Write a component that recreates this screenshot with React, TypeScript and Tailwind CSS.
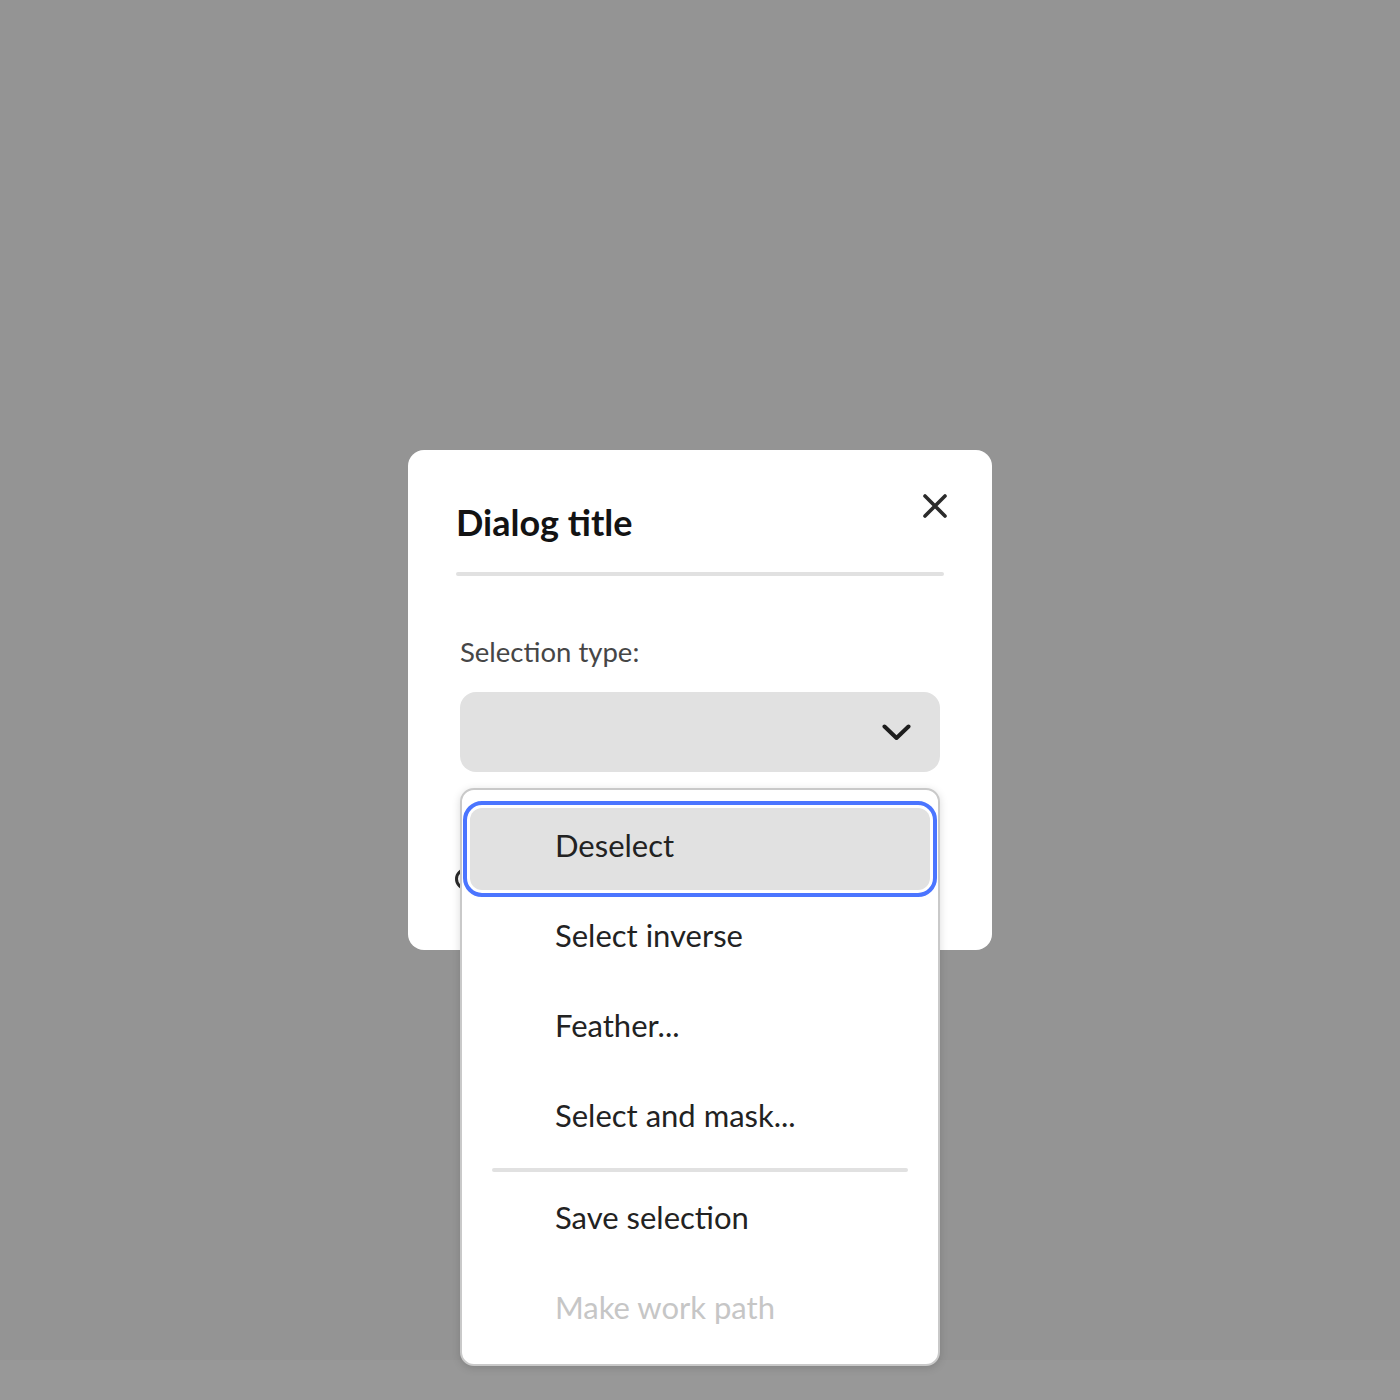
import React from "react";

const items = [
  { label: "Deselect", focused: true },
  { label: "Select inverse" },
  { label: "Feather..." },
  { label: "Select and mask..." },
];

function Item({ label, focused, disabled }: { label: string; focused?: boolean; disabled?: boolean }) {
  return (
    <div
      className={
        "mx-[8px] h-[82px] shrink-0 rounded-[12px] flex items-center pl-[85px] text-[31px] " +
        (disabled ? "text-[#c6c6c6] " : "text-[#222222] ") +
        (focused ? "bg-[#e1e1e1] outline-[4px] outline-solid outline-[#4b75ff] outline-offset-[3px]" : "")
      }
    >
      <span className="-mt-[7px]">{label}</span>
    </div>
  );
}

export default function App() {
  return (
    <div className="w-[1400px] h-[1400px] bg-[#989898] relative" style={{ fontFamily: "Lato, 'Liberation Sans', sans-serif" }}>
      <div className="h-[1360px] bg-[#949494]" />
      <div className="absolute inset-0 flex items-center justify-center">
        <div className="relative w-[584px] h-[500px] bg-white rounded-[16px] flex flex-col">
          <div className="flex items-start justify-between pl-[48px] pr-[44px]">
            <h2 className="pt-[52px] text-[36px] leading-[40px] font-bold text-[#131313]">Dialog title</h2>
            <button className="mt-[42px] mr-[-1px] w-[28px] h-[28px] flex items-center justify-center text-[#2b2b2b]">
              <svg width="24" height="24" viewBox="0 0 24 24" fill="none" stroke="currentColor" strokeWidth="3.6" strokeLinecap="round">
                <path d="M2 2 L22 22 M22 2 L2 22" />
              </svg>
            </button>
          </div>
          <div className="mx-[48px] mt-[30px] h-[4px] rounded-full bg-[#e1e1e1]" />
          <div className="px-[52px] pt-[59px]">
            <div className="text-[27.5px] leading-[34px] text-[#464646]">Selection type:</div>
            <div className="relative mt-[23px]">
              <div className="h-[80px] rounded-[16px] bg-[#e1e1e1] flex items-center justify-end pr-[29px]">
                <svg width="29" height="17" viewBox="0 0 29 17" fill="none" stroke="#1d1d1d" strokeWidth="4" strokeLinecap="round" strokeLinejoin="round">
                  <path d="M2.5 2.5 L14.5 14 L26.5 2.5" />
                </svg>
              </div>
              <div className="mt-[96px] -ml-[5px] flex items-center gap-3">
                <div className="w-[22px] h-[22px] rounded-full border-[3px] border-[#2b2b2b]" />
              </div>
              <div className="absolute left-0 top-[96px] w-[480px] bg-white border-2 border-[#c9c9c9] rounded-[14px] pt-[18px] pb-[12px] flex flex-col gap-[8px] shadow-[0_2px_8px_rgba(0,0,0,0.15)]">
                {items.map((it) => (
                  <Item key={it.label} label={it.label} focused={it.focused} />
                ))}
                <div className="mx-[30px] h-[4px] shrink-0 rounded-full bg-[#e1e1e1]" />
                <Item label="Save selection" />
                <Item label="Make work path" disabled />
              </div>
            </div>
          </div>
        </div>
      </div>
    </div>
  );
}
